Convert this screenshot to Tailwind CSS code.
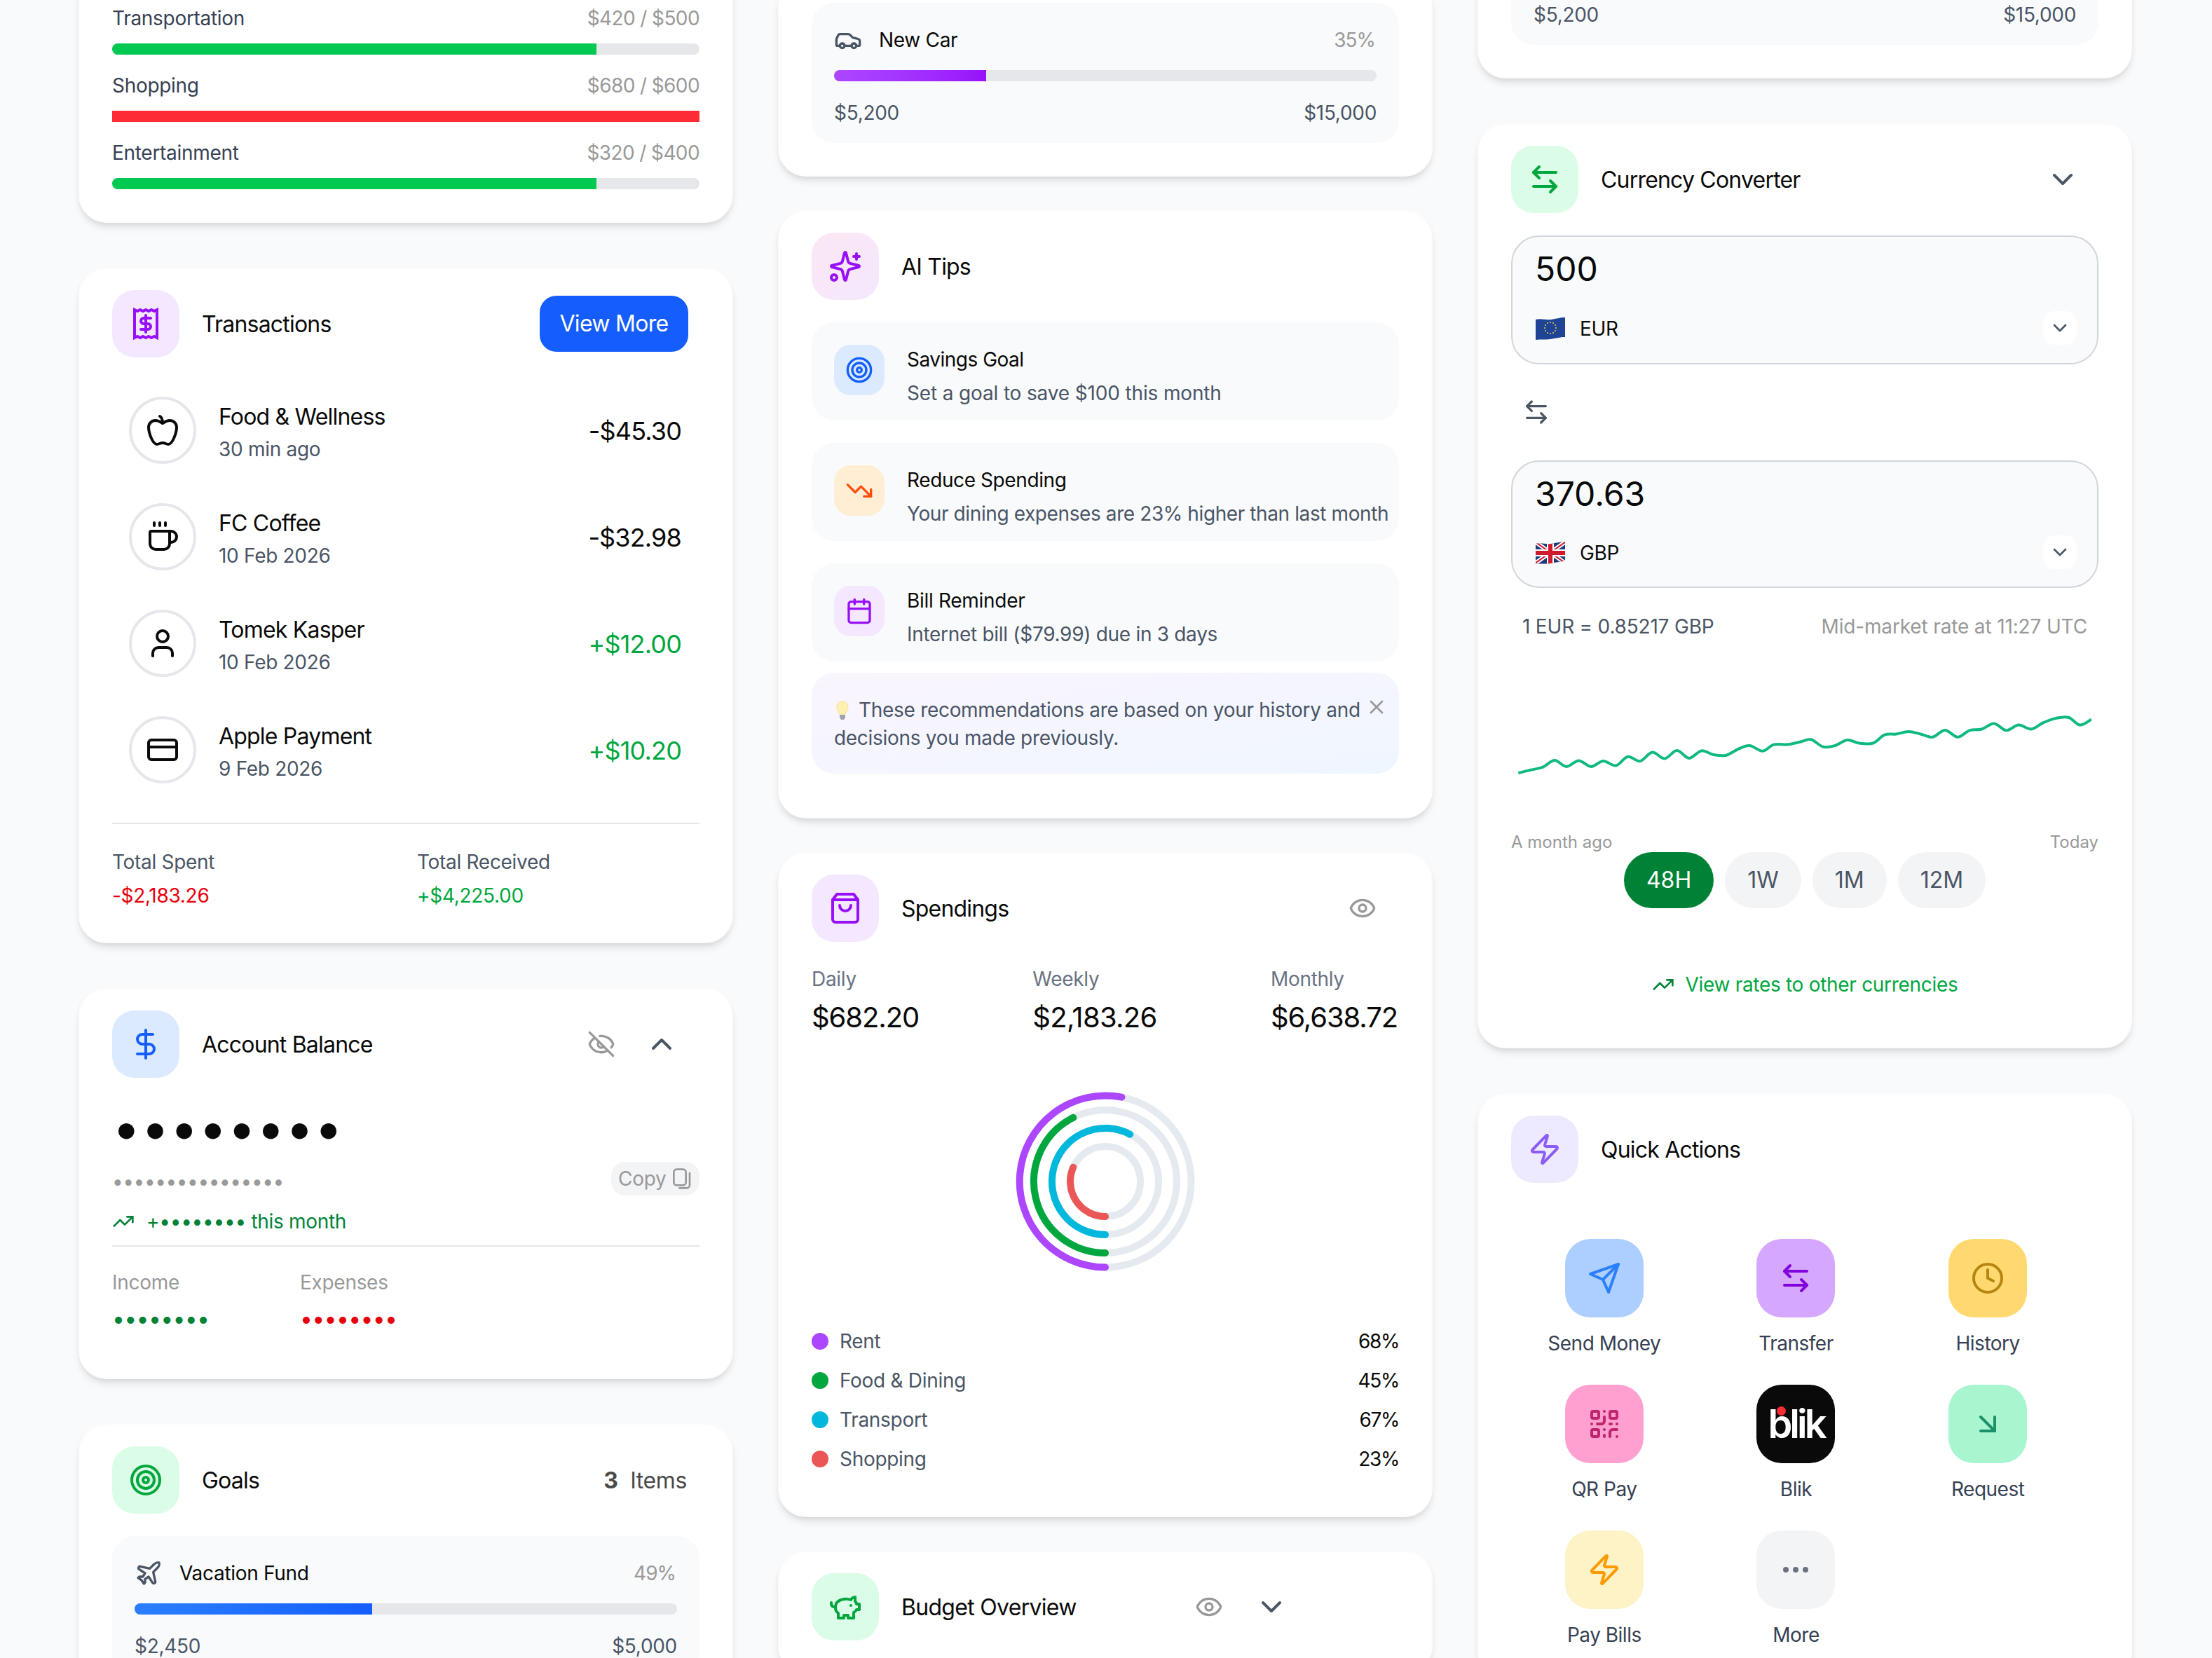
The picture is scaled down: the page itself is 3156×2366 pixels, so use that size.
<!DOCTYPE html>
<html lang="en">
<head>
  <meta charset="UTF-8">
  <title>Finance Dashboard</title>
  <script src="https://cdn.jsdelivr.net/npm/@tailwindcss/browser@4"></script>
</head>
<body class="bg-gray-50 font-[Inter,sans-serif] text-[#0a0a0a] tracking-[-0.3px]">
<div class="h-[2366px] overflow-hidden pl-[112px] grid grid-cols-[934px_934px_934px] gap-x-[64px] items-start">

  <!-- left column -->
  <div class="flex flex-col gap-[64px]">

    <!-- budget rows -->
    <div class="-mt-[42px] bg-white rounded-[40px] border-2 border-[#fcfcfd] shadow-[0_8px_12px_-2px_rgba(0,0,0,0.1),0_4px_8px_-4px_rgba(0,0,0,0.1)] px-[46px] pt-[46px] pb-[46px]">
      <div class="flex flex-col gap-[24px]">
        <div>
          <div class="flex justify-between text-[28px] leading-[40px] mb-[16px]"><span class="text-gray-700">Transportation</span><span class="text-[#999] tracking-[-0.6px]">$420 / $500</span></div>
          <div class="h-[16px] rounded-full bg-gray-200 overflow-hidden"><div class="h-full w-[691px] bg-green-500"></div></div>
        </div>
        <div>
          <div class="flex justify-between text-[28px] leading-[40px] mb-[16px]"><span class="text-gray-700">Shopping</span><span class="text-[#999] tracking-[-0.6px]">$680 / $600</span></div>
          <div class="h-[16px] bg-red-500"></div>
        </div>
        <div>
          <div class="flex justify-between text-[28px] leading-[40px] mb-[16px]"><span class="text-gray-700">Entertainment</span><span class="text-[#999] tracking-[-0.6px]">$320 / $400</span></div>
          <div class="h-[16px] rounded-full bg-gray-200 overflow-hidden"><div class="h-full w-[691px] bg-green-500"></div></div>
        </div>
      </div>
    </div>

    <!-- transactions -->
    <div class="bg-white rounded-[40px] border-2 border-[#fcfcfd] shadow-[0_8px_12px_-2px_rgba(0,0,0,0.1),0_4px_8px_-4px_rgba(0,0,0,0.1)] px-[46px] pt-[30px] pb-[46px]">
      <div class="flex items-center h-[96px]">
        <div class="w-[96px] h-[96px] rounded-[32px] bg-purple-100 flex items-center justify-center text-purple-600">
          <svg class="w-[48px] h-[48px]" viewBox="0 0 24 24" fill="none" stroke="currentColor" stroke-width="2" stroke-linejoin="miter"><path d="M4 2 6 3 8 2 10 3 12 2 14 3 16 2 18 3 20 2V22L18 21 16 22 14 21 12 22 10 21 8 22 6 21 4 22Z"/><path d="M15.500 8h-5a2 2 0 0 0 0 4h3a2 2 0 0 1 0 4h-5M12 6v12" stroke-linecap="round"/></svg>
        </div>
        <div class="ml-[32px] pt-[2px] text-[32px] leading-[48px] tracking-[-0.8px]">Transactions</div>
        <button class="ml-auto mr-[16px] w-[212px] h-[80px] rounded-[24px] bg-blue-600 text-white text-[32px] tracking-[-0.7px]">View More</button>
      </div>
      <div class="mt-[56px] flex flex-col gap-[56px] pl-[24px] pr-[26px]">
        <div class="flex items-center">
          <div class="w-[96px] h-[96px] rounded-full border-4 border-gray-200 flex items-center justify-center">
            <svg class="w-[48px] h-[48px]" viewBox="0 0 24 24" fill="none" stroke="currentColor" stroke-width="2" stroke-linecap="round" stroke-linejoin="round"><path d="M12 20.94c1.5 0 2.75 1.06 4 1.06 3 0 6-8 6-12.22A4.91 4.91 0 0 0 17 5c-2.22 0-4 1.44-5 2-1-.56-2.78-2-5-2a4.9 4.9 0 0 0-5 4.78C2 14 5 22 8 22c1.25 0 2.5-1.06 4-1.06Z"/><path d="M10 2c1 .5 2 2 2 5"/></svg>
          </div>
          <div class="ml-[32px] pt-[3px]">
            <div class="text-[32px] leading-[48px] tracking-[-0.8px]">Food &amp; Wellness</div>
            <div class="mt-[2px] text-[28px] leading-[40px] text-gray-600">30 min ago</div>
          </div>
          <div class="ml-auto pt-[2px] text-[36px] leading-[56px] tracking-[-0.85px]">-$45.30</div>
        </div>
        <div class="flex items-center">
          <div class="w-[96px] h-[96px] rounded-full border-4 border-gray-200 flex items-center justify-center">
            <svg class="w-[48px] h-[48px]" viewBox="0 0 24 24" fill="none" stroke="currentColor" stroke-width="2" stroke-linecap="round" stroke-linejoin="round"><path d="M10 2v2"/><path d="M14 2v2"/><path d="M16 8a1 1 0 0 1 1 1v8a4 4 0 0 1-4 4H7a4 4 0 0 1-4-4V9a1 1 0 0 1 1-1h14a4 4 0 1 1 0 8h-1"/><path d="M6 2v2"/></svg>
          </div>
          <div class="ml-[32px] pt-[3px]">
            <div class="text-[32px] leading-[48px] tracking-[-0.8px]">FC Coffee</div>
            <div class="mt-[2px] text-[28px] leading-[40px] text-gray-600">10 Feb 2026</div>
          </div>
          <div class="ml-auto pt-[2px] text-[36px] leading-[56px] tracking-[-0.85px]">-$32.98</div>
        </div>
        <div class="flex items-center">
          <div class="w-[96px] h-[96px] rounded-full border-4 border-gray-200 flex items-center justify-center">
            <svg class="w-[48px] h-[48px]" viewBox="0 0 24 24" fill="none" stroke="currentColor" stroke-width="2" stroke-linecap="round" stroke-linejoin="round"><circle cx="12" cy="7" r="4"/><path d="M19 21v-2a4 4 0 0 0-4-4H9a4 4 0 0 0-4 4v2"/></svg>
          </div>
          <div class="ml-[32px] pt-[3px]">
            <div class="text-[32px] leading-[48px] tracking-[-0.8px]">Tomek Kasper</div>
            <div class="mt-[2px] text-[28px] leading-[40px] text-gray-600">10 Feb 2026</div>
          </div>
          <div class="ml-auto pt-[2px] text-[36px] leading-[56px] tracking-[-0.85px] text-green-600">+$12.00</div>
        </div>
        <div class="flex items-center">
          <div class="w-[96px] h-[96px] rounded-full border-4 border-gray-200 flex items-center justify-center">
            <svg class="w-[48px] h-[48px]" viewBox="0 0 24 24" fill="none" stroke="currentColor" stroke-width="2" stroke-linecap="round" stroke-linejoin="round"><rect width="20" height="14" x="2" y="5" rx="2"/><line x1="2" x2="22" y1="10" y2="10"/></svg>
          </div>
          <div class="ml-[32px] pt-[3px]">
            <div class="text-[32px] leading-[48px] tracking-[-0.8px]">Apple Payment</div>
            <div class="mt-[2px] text-[28px] leading-[40px] text-gray-600">9 Feb 2026</div>
          </div>
          <div class="ml-auto pt-[2px] text-[36px] leading-[56px] tracking-[-0.85px] text-green-600">+$10.20</div>
        </div>
      </div>
      <div class="mt-[56px] border-t-2 border-gray-200 pt-[34px] grid grid-cols-2 gap-x-[32px] text-[28px] leading-[40px]">
        <div>
          <div class="text-gray-600">Total Spent</div>
          <div class="mt-[8px] text-red-600">-$2,183.26</div>
        </div>
        <div>
          <div class="text-gray-600">Total Received</div>
          <div class="mt-[8px] text-green-600">+$4,225.00</div>
        </div>
      </div>
    </div>

    <!-- account balance -->
    <div class="bg-white rounded-[40px] border-2 border-[#fcfcfd] shadow-[0_8px_12px_-2px_rgba(0,0,0,0.1),0_4px_8px_-4px_rgba(0,0,0,0.1)] px-[46px] pt-[30px] pb-[64px]">
      <div class="flex items-center h-[96px]">
        <div class="w-[96px] h-[96px] rounded-[32px] bg-blue-100 flex items-center justify-center text-blue-600">
          <svg class="w-[48px] h-[48px]" viewBox="0 0 24 24" fill="none" stroke="currentColor" stroke-width="2" stroke-linecap="round" stroke-linejoin="round"><line x1="12" y1="2" x2="12" y2="22"/><path d="M17 5H9.5a3.5 3.5 0 0 0 0 7h5a3.5 3.5 0 0 1 0 7H6"/></svg>
        </div>
        <div class="ml-[32px] pt-[2px] text-[32px] leading-[48px] tracking-[-0.8px]">Account Balance</div>
        <svg class="ml-auto w-[40px] h-[40px] text-[#999]" viewBox="0 0 24 24" fill="none" stroke="currentColor" stroke-width="2" stroke-linecap="round" stroke-linejoin="round"><path d="M10.733 5.076a10.744 10.744 0 0 1 11.205 6.575 1 1 0 0 1 0 .696 10.747 10.747 0 0 1-1.444 2.49"/><path d="M14.084 14.158a3 3 0 0 1-4.242-4.242"/><path d="M17.479 17.499a10.75 10.75 0 0 1-15.417-5.151 1 1 0 0 1 0-.696 10.75 10.75 0 0 1 4.446-5.143"/><path d="m2 2 20 20"/></svg>
        <svg class="ml-[42px] mr-[30px] w-[48px] h-[48px] text-gray-600" viewBox="0 0 24 24" fill="none" stroke="currentColor" stroke-width="2" stroke-linecap="round" stroke-linejoin="round"><path d="m18 15-6-6-6 6"/></svg>
      </div>
      <div class="mt-[35px] h-[72px] text-[72px] leading-[72px] tracking-[0.7px]">••••••••</div>
      <div class="mt-[13px] h-[48px] flex items-center justify-between">
        <span class="pt-[8px] text-[28px] leading-[40px] text-[#999] tracking-[-0.45px]">••••••••••••••••</span>
        <div class="h-[48px] w-[126px] rounded-[20px] bg-gray-100 flex items-center pl-[10px] text-[28px] text-[#999]">Copy
          <svg class="ml-[6px] w-[32px] h-[32px]" viewBox="0 0 24 24" fill="none" stroke="currentColor" stroke-width="2" stroke-linecap="round" stroke-linejoin="round"><rect x="4" y="2" width="13" height="17" rx="3"/><path d="M21 6v13a3 3 0 0 1-3 3H10"/></svg>
        </div>
      </div>
      <div class="mt-[17px] flex items-center text-[28px] leading-[40px] text-green-700">
        <svg class="w-[32px] h-[32px]" viewBox="0 0 24 24" fill="none" stroke="currentColor" stroke-width="2" stroke-linecap="round" stroke-linejoin="round"><polyline points="22 7 13.5 15.5 8.5 10.5 2 17"/><polyline points="16 7 22 7 22 13"/></svg>
        <span class="ml-[17px]">+•••••••• this month</span>
      </div>
      <div class="mt-[14px] border-t-2 border-gray-200"></div>
      <div class="mt-[31px] flex text-[28px] leading-[40px] text-[#999]">
        <div class="w-[268px]">
          <div>Income</div>
          <div class="mt-[12px] text-[32px] text-green-700 tracking-[-0.7px]">••••••••</div>
        </div>
        <div>
          <div>Expenses</div>
          <div class="mt-[12px] text-[32px] text-red-600 tracking-[-0.7px]">••••••••</div>
        </div>
      </div>
    </div>

    <!-- goals -->
    <div class="bg-white rounded-[40px] border-2 border-[#fcfcfd] shadow-[0_8px_12px_-2px_rgba(0,0,0,0.1),0_4px_8px_-4px_rgba(0,0,0,0.1)] px-[46px] pt-[30px] pb-[46px]">
      <div class="flex items-center h-[96px]">
        <div class="w-[96px] h-[96px] rounded-[32px] bg-green-100 flex items-center justify-center text-green-600">
          <svg class="w-[48px] h-[48px]" viewBox="0 0 24 24" fill="none" stroke="currentColor" stroke-width="2"><circle cx="12" cy="12" r="10"/><circle cx="12" cy="12" r="6"/><circle cx="12" cy="12" r="2"/></svg>
        </div>
        <div class="ml-[32px] pt-[2px] text-[32px] leading-[48px] tracking-[-0.8px]">Goals</div>
        <div class="ml-auto mr-[18px] pt-[2px] text-[32px] leading-[48px] text-[#4a4a4a] tracking-[-0.4px]"><span class="font-bold mr-[9px]">3</span> Items</div>
      </div>
      <div class="mt-[32px] rounded-[32px] bg-gray-50 px-[32px] pt-[33px] pb-[23px]">
        <div class="flex items-center h-[40px] text-[28px] leading-[40px]">
          <svg class="w-[40px] h-[40px] text-gray-600" viewBox="0 0 24 24" fill="none" stroke="currentColor" stroke-width="2" stroke-linecap="round" stroke-linejoin="round"><path d="M17.8 19.2 16 11l3.5-3.5C21 6 21.5 4 21 3c-1-.5-3 0-4.5 1.5L13 8 4.8 6.2c-.5-.1-.9.1-1.1.5l-.3.5c-.2.5-.1 1 .3 1.3L9 12l-2 3H4l-1 1 3 2 2 3 1-1v-3l3-2 3.5 5.3c.3.4.8.5 1.3.3l.5-.2c.4-.3.6-.7.5-1.2z"/></svg>
          <span class="ml-[24px]">Vacation Fund</span>
          <span class="ml-auto mr-[2px] text-[#999] tracking-[-1px]">49%</span>
        </div>
        <div class="mt-[23px] h-[16px] rounded-full bg-gray-200 overflow-hidden"><div class="h-full w-[339px] bg-gradient-to-r from-blue-500 to-blue-600"></div></div>
        <div class="mt-[25px] flex justify-between text-[28px] leading-[40px] text-gray-600"><span>$2,450</span><span>$5,000</span></div>
      </div>
    </div>
  </div>

  <!-- middle column -->
  <div class="flex flex-col gap-[48px]">

    <!-- new car goal -->
    <div class="-mt-[30px] bg-white rounded-[40px] border-2 border-[#fcfcfd] shadow-[0_8px_12px_-2px_rgba(0,0,0,0.1),0_4px_8px_-4px_rgba(0,0,0,0.1)] px-[46px] pt-[32px] pb-[46px]">
      <div class="rounded-[32px] bg-gray-50 px-[32px] pt-[33px] pb-[23px]">
        <div class="flex items-center h-[40px] text-[28px] leading-[40px]">
          <svg class="w-[40px] h-[40px] text-gray-600" viewBox="0 0 24 24" fill="none" stroke="currentColor" stroke-width="2" stroke-linecap="round" stroke-linejoin="round"><path d="M19 17h2c.6 0 1-.4 1-1v-3c0-.9-.7-1.7-1.5-1.9C18.7 10.6 16 10 16 10s-1.3-1.4-2.2-2.3c-.5-.4-1.1-.7-1.8-.7H5c-.6 0-1.1.4-1.4.9l-1.4 2.9A3.7 3.7 0 0 0 2 12v4c0 .6.4 1 1 1h2"/><circle cx="7" cy="17" r="2"/><path d="M9 17h6"/><circle cx="17" cy="17" r="2"/></svg>
          <span class="ml-[24px]">New Car</span>
          <span class="ml-auto mr-[2px] text-[#999] tracking-[-1px]">35%</span>
        </div>
        <div class="mt-[23px] h-[16px] rounded-full bg-gray-200 overflow-hidden"><div class="h-full w-[217px] bg-gradient-to-r from-purple-500 to-purple-600"></div></div>
        <div class="mt-[25px] flex justify-between text-[28px] leading-[40px] text-gray-600"><span>$5,200</span><span>$15,000</span></div>
      </div>
    </div>

    <!-- ai tips -->
    <div class="bg-white rounded-[40px] border-2 border-[#fcfcfd] shadow-[0_8px_12px_-2px_rgba(0,0,0,0.1),0_4px_8px_-4px_rgba(0,0,0,0.1)] px-[46px] pt-[30px] pb-[62px]">
      <div class="flex items-center h-[96px]">
        <div class="w-[96px] h-[96px] rounded-[32px] bg-gradient-to-br from-pink-100 to-purple-100 flex items-center justify-center text-purple-600">
          <svg class="w-[48px] h-[48px]" viewBox="0 0 24 24" fill="none" stroke="currentColor" stroke-width="2" stroke-linecap="round" stroke-linejoin="round"><path d="M9.937 15.5A2 2 0 0 0 8.5 14.063l-6.135-1.582a.5.5 0 0 1 0-.962L8.5 9.936A2 2 0 0 0 9.937 8.5l1.582-6.135a.5.5 0 0 1 .963 0L14.063 8.5A2 2 0 0 0 15.5 9.937l6.135 1.581a.5.5 0 0 1 0 .964L15.5 14.063a2 2 0 0 0-1.437 1.437l-1.582 6.135a.5.5 0 0 1-.963 0z"/><path d="M20 3v4"/><path d="M22 5h-4"/><circle cx="4" cy="20" r="2"/></svg>
        </div>
        <div class="ml-[32px] pt-[2px] text-[32px] leading-[48px] tracking-[-0.8px]">AI Tips</div>
      </div>
      <div class="mt-[32px] flex flex-col gap-[32px]">
        <div class="h-[140px] rounded-[32px] bg-gray-50 pl-[32px] flex">
          <div class="shrink-0 mt-[32px] w-[72px] h-[72px] rounded-[24px] bg-blue-100 flex items-center justify-center text-blue-600">
            <svg class="w-[40px] h-[40px]" viewBox="0 0 24 24" fill="none" stroke="currentColor" stroke-width="2"><circle cx="12" cy="12" r="10"/><circle cx="12" cy="12" r="6"/><circle cx="12" cy="12" r="2"/></svg>
          </div>
          <div class="ml-[32px] pt-[33px] text-[28px] leading-[40px]">
            <div class="tracking-[-0.5px]">Savings Goal</div>
            <div class="mt-[8px] text-gray-600 tracking-[-0.15px]">Set a goal to save $100 this month</div>
          </div>
        </div>
        <div class="h-[140px] rounded-[32px] bg-gray-50 pl-[32px] flex">
          <div class="shrink-0 mt-[32px] w-[72px] h-[72px] rounded-[24px] bg-orange-100 flex items-center justify-center text-[#ff4d0a]">
            <svg class="w-[40px] h-[40px]" viewBox="0 0 24 24" fill="none" stroke="currentColor" stroke-width="2" stroke-linecap="round" stroke-linejoin="round"><polyline points="22 17 13.5 8.5 8.5 13.5 2 7"/><polyline points="16 17 22 17 22 11"/></svg>
          </div>
          <div class="ml-[32px] pt-[33px] text-[28px] leading-[40px]">
            <div class="tracking-[-0.4px]">Reduce Spending</div>
            <div class="mt-[8px] text-gray-600 whitespace-nowrap tracking-[-0.4px]">Your dining expenses are 23% higher than last month</div>
          </div>
        </div>
        <div class="h-[140px] rounded-[32px] bg-gray-50 pl-[32px] flex">
          <div class="shrink-0 mt-[32px] w-[72px] h-[72px] rounded-[24px] bg-purple-100 flex items-center justify-center text-purple-600">
            <svg class="w-[40px] h-[40px]" viewBox="0 0 24 24" fill="none" stroke="currentColor" stroke-width="2" stroke-linecap="round" stroke-linejoin="round"><path d="M8 2v4"/><path d="M16 2v4"/><rect width="18" height="18" x="3" y="4" rx="2"/><path d="M3 10h18"/></svg>
          </div>
          <div class="ml-[32px] pt-[33px] text-[28px] leading-[40px]">
            <div>Bill Reminder</div>
            <div class="mt-[8px] text-gray-600">Internet bill ($79.99) due in 3 days</div>
          </div>
        </div>
      </div>
      <div class="mt-[16px] h-[144px] rounded-[32px] bg-gradient-to-br from-purple-50 to-blue-50 pl-[32px] pt-[33px] flex items-start">
        <div class="w-[752px] text-[28px] leading-[40px] text-gray-600">
          <svg class="inline-block w-[24px] h-[30px] align-[-6px] mr-[11px]" viewBox="0 0 24 30"><path d="M12 2c5 0 8 3.5 8 8 0 4-3 6-3.5 10h-9C7 16 4 14 4 10c0-4.500 3-8 8-8Z" fill="#fef0b0" stroke="#f8e08a" stroke-width="1"/><path d="M8 21h8v4l-2 3h-4l-2-3Z" fill="#9ca3af"/></svg>These recommendations are based on your history and decisions you made previously.
        </div>
        <svg class="ml-[6px] w-[32px] h-[32px] text-[#999]" viewBox="0 0 24 24" fill="none" stroke="currentColor" stroke-width="2" stroke-linecap="round"><path d="M18 6 6 18"/><path d="m6 6 12 12"/></svg>
      </div>
    </div>

    <!-- spendings -->
    <div class="bg-white rounded-[40px] border-2 border-[#fcfcfd] shadow-[0_8px_12px_-2px_rgba(0,0,0,0.1),0_4px_8px_-4px_rgba(0,0,0,0.1)] px-[46px] pt-[30px] pb-[61px]">
      <div class="flex items-center h-[96px]">
        <div class="w-[96px] h-[96px] rounded-[32px] bg-purple-100 flex items-center justify-center text-purple-600">
          <svg class="w-[48px] h-[48px]" viewBox="0 0 24 24" fill="none" stroke="currentColor" stroke-width="2" stroke-linecap="round" stroke-linejoin="round"><path d="M6 2 3 6v14a2 2 0 0 0 2 2h14a2 2 0 0 0 2-2V6l-3-4Z"/><path d="M3 6h18"/><path d="M16 10a4 4 0 0 1-8 0"/></svg>
        </div>
        <div class="ml-[32px] pt-[2px] text-[32px] leading-[48px] tracking-[-0.8px]">Spendings</div>
        <svg class="ml-auto mr-[32px] w-[40px] h-[40px] text-[#999]" viewBox="0 0 24 24" fill="none" stroke="currentColor" stroke-width="2" stroke-linecap="round" stroke-linejoin="round"><path d="M2.062 12.348a1 1 0 0 1 0-.696 10.75 10.75 0 0 1 19.876 0 1 1 0 0 1 0 .696 10.75 10.75 0 0 1-19.876 0"/><circle cx="12" cy="12" r="3"/></svg>
      </div>
      <div class="mt-[33px] pr-[2px] flex justify-between">
        <div><div class="text-[28px] leading-[40px] text-gray-500">Daily</div><div class="mt-[7px] text-[40px] leading-[56px] tracking-[-1.1px]">$682.20</div></div>
        <div><div class="text-[28px] leading-[40px] text-gray-500">Weekly</div><div class="mt-[7px] text-[40px] leading-[56px] tracking-[-0.7px]">$2,183.26</div></div>
        <div><div class="text-[28px] leading-[40px] text-gray-500">Monthly</div><div class="mt-[7px] text-[40px] leading-[56px] tracking-[-1.1px]">$6,638.72</div></div>
      </div>
      <svg class="mx-auto mt-[76px] w-[260px] h-[260px]" viewBox="0 0 260 260" fill="none" stroke-width="10" stroke-linecap="round">
        <circle cx="130" cy="130" r="122.500" stroke="#e5e9f0"/>
        <circle cx="130" cy="130" r="102" stroke="#e5e9f0"/>
        <circle cx="130" cy="130" r="76" stroke="#e5e9f0"/>
        <circle cx="130" cy="130" r="50" stroke="#e5e9f0"/>
        <path d="M130 252.500A122.500 122.500 0 1 1 153.400 9.700" stroke="#ad46ff"/>
        <path d="M130 232A102 102 0 0 1 84.300 38.800" stroke="#00a63e"/>
        <path d="M130 206A76 76 0 1 1 165.200 62.700" stroke="#00b8db"/>
        <path d="M130 180A50 50 0 0 1 84.300 109.700" stroke="#eb5757"/>
      </svg>
      <div class="mt-[78px] flex flex-col gap-[16px] text-[28px] leading-[40px]">
        <div class="flex items-center"><span class="w-[24px] h-[24px] rounded-full bg-purple-500"></span><span class="ml-[16px] text-gray-600">Rent</span><span class="ml-auto tracking-[-1.4px]">68%</span></div>
        <div class="flex items-center"><span class="w-[24px] h-[24px] rounded-full bg-green-600"></span><span class="ml-[16px] text-gray-600">Food &amp; Dining</span><span class="ml-auto tracking-[-1.4px]">45%</span></div>
        <div class="flex items-center"><span class="w-[24px] h-[24px] rounded-full bg-cyan-500"></span><span class="ml-[16px] text-gray-600">Transport</span><span class="ml-auto tracking-[-1.4px]">67%</span></div>
        <div class="flex items-center"><span class="w-[24px] h-[24px] rounded-full bg-[#eb5757]"></span><span class="ml-[16px] text-gray-600">Shopping</span><span class="ml-auto tracking-[-1.4px]">23%</span></div>
      </div>
    </div>

    <!-- budget overview -->
    <div class="bg-white rounded-[40px] border-2 border-[#fcfcfd] shadow-[0_8px_12px_-2px_rgba(0,0,0,0.1),0_4px_8px_-4px_rgba(0,0,0,0.1)] px-[46px] pt-[30px] pb-[46px]">
      <div class="flex items-center h-[96px]">
        <div class="w-[96px] h-[96px] rounded-[32px] bg-green-100 flex items-center justify-center text-green-600">
          <svg class="w-[48px] h-[48px]" viewBox="0 0 24 24" fill="none" stroke="currentColor" stroke-width="2" stroke-linecap="round" stroke-linejoin="round"><path d="M19 5c-1.500 0-2.800 1.400-3 2-3.500-1.500-11-.3-11 5 0 1.800 0 3 2 4.500V20h4v-2h3v2h4v-4c1-.5 1.700-1 2-2h2v-4h-2c0-1-.5-1.500-1-2V5z"/><path d="M2 9v1c0 1.100.9 2 2 2h1"/><path d="M16 11h.01"/></svg>
        </div>
        <div class="ml-[32px] w-[419px] pt-[2px] text-[32px] leading-[48px] tracking-[-0.7px]">Budget Overview</div>
        <svg class="w-[40px] h-[40px] text-[#999]" viewBox="0 0 24 24" fill="none" stroke="currentColor" stroke-width="2" stroke-linecap="round" stroke-linejoin="round"><path d="M2.062 12.348a1 1 0 0 1 0-.696 10.75 10.75 0 0 1 19.876 0 1 1 0 0 1 0 .696 10.75 10.75 0 0 1-19.876 0"/><circle cx="12" cy="12" r="3"/></svg>
        <svg class="ml-[45px] w-[48px] h-[48px] text-gray-600" viewBox="0 0 24 24" fill="none" stroke="currentColor" stroke-width="2" stroke-linecap="round" stroke-linejoin="round"><path d="m6 9 6 6 6-6"/></svg>
      </div>
    </div>
  </div>

  <!-- right column -->
  <div class="flex flex-col gap-[64px]">

    <!-- goal tail -->
    <div class="-mt-[61px] bg-white rounded-[40px] border-2 border-[#fcfcfd] shadow-[0_8px_12px_-2px_rgba(0,0,0,0.1),0_4px_8px_-4px_rgba(0,0,0,0.1)] px-[46px] pt-[30px] pb-[46px]">
      <div class="rounded-[32px] bg-gray-50 px-[32px] pt-[30px] pb-[23px]">
        <div class="flex justify-between text-[28px] leading-[40px] text-gray-600"><span>$5,200</span><span>$15,000</span></div>
      </div>
    </div>

    <!-- currency converter -->
    <div class="bg-white rounded-[40px] border-2 border-[#fcfcfd] shadow-[0_8px_12px_-2px_rgba(0,0,0,0.1),0_4px_8px_-4px_rgba(0,0,0,0.1)] px-[46px] pt-[30px] pb-[69px]">
      <div class="flex items-center h-[96px]">
        <div class="w-[96px] h-[96px] rounded-[32px] bg-green-100 flex items-center justify-center text-green-600">
          <svg class="w-[48px] h-[48px]" viewBox="0 0 24 24" fill="none" stroke="currentColor" stroke-width="2" stroke-linecap="round" stroke-linejoin="round"><path d="M8 3 4 7l4 4"/><path d="M4 7h16"/><path d="m16 21 4-4-4-4"/><path d="M20 17H4"/></svg>
        </div>
        <div class="ml-[32px] pt-[2px] text-[32px] leading-[48px] tracking-[-0.8px]">Currency Converter</div>
        <svg class="ml-auto mr-[27px] w-[48px] h-[48px] text-gray-600" viewBox="0 0 24 24" fill="none" stroke="currentColor" stroke-width="2" stroke-linecap="round" stroke-linejoin="round"><path d="m6 9 6 6 6-6"/></svg>
      </div>
      <div class="mt-[32px] rounded-[40px] border-2 border-gray-300 bg-gray-50 pl-[32px] pr-[29px] pt-[18px] pb-[26px]">
        <div class="text-[48px] leading-[56px] tracking-[0px]">500</div>
        <div class="mt-[32px] flex items-center h-[48px]">
          <svg class="w-[44px] h-[40px]" viewBox="0 0 44 40"><path d="M1 8C9 6 15 9 23 8S35 5 43 5V33C35 33 30 35 22 36S9 36 1 37Z" fill="#1f4496"/><g fill="#f2c94c"><circle cx="22" cy="12" r="1"/><circle cx="26" cy="13" r="1"/><circle cx="29" cy="16" r="1"/><circle cx="30" cy="20" r="1"/><circle cx="29" cy="24" r="1"/><circle cx="26" cy="27" r="1"/><circle cx="22" cy="28" r="1"/><circle cx="18" cy="27" r="1"/><circle cx="15" cy="24" r="1"/><circle cx="14" cy="20" r="1"/><circle cx="15" cy="16" r="1"/><circle cx="18" cy="13" r="1"/></g></svg>
          <span class="ml-[20px] pt-[2px] text-[28px] leading-[40px]">EUR</span>
          <div class="ml-auto w-[48px] h-[48px] rounded-[16px] bg-white flex items-center justify-center text-gray-600">
            <svg class="w-[32px] h-[32px]" viewBox="0 0 24 24" fill="none" stroke="currentColor" stroke-width="2" stroke-linecap="round" stroke-linejoin="round"><path d="m6 9 6 6 6-6"/></svg>
          </div>
        </div>
      </div>
      <div class="mt-[48px] ml-[16px] text-gray-600">
        <svg class="w-[40px] h-[40px]" viewBox="0 0 24 24" fill="none" stroke="currentColor" stroke-width="2" stroke-linecap="round" stroke-linejoin="round"><path d="M8 3 4 7l4 4"/><path d="M4 7h16"/><path d="m16 21 4-4-4-4"/><path d="M20 17H4"/></svg>
      </div>
      <div class="mt-[49px] rounded-[40px] border-2 border-gray-300 bg-gray-50 pl-[32px] pr-[29px] pt-[18px] pb-[25px]">
        <div class="text-[48px] leading-[56px] tracking-[0px]">370.63</div>
        <div class="mt-[31px] flex items-center h-[48px]">
          <svg class="w-[44px] h-[40px]" viewBox="0 0 44 40"><defs><clipPath id="uk-flag"><path d="M1 8C9 6 15 9 23 8S35 5 43 5V33C35 33 30 35 22 36S9 36 1 37Z"/></clipPath></defs><g clip-path="url(#uk-flag)"><rect width="44" height="40" fill="#1f3a7d"/><path d="M0 5 44 36M44 5 0 36" stroke="#fff" stroke-width="6"/><path d="M0 5 44 36M44 5 0 36" stroke="#cf1b2b" stroke-width="2"/><path d="M22 0V40M0 21H44" stroke="#fff" stroke-width="10"/><path d="M22 0V40M0 21H44" stroke="#cf1b2b" stroke-width="6"/></g></svg>
          <span class="ml-[20px] pt-[2px] text-[28px] leading-[40px]">GBP</span>
          <div class="ml-auto w-[48px] h-[48px] rounded-[16px] bg-white flex items-center justify-center text-gray-600">
            <svg class="w-[32px] h-[32px]" viewBox="0 0 24 24" fill="none" stroke="currentColor" stroke-width="2" stroke-linecap="round" stroke-linejoin="round"><path d="m6 9 6 6 6-6"/></svg>
          </div>
        </div>
      </div>
      <div class="mt-[35px] px-[16px] flex justify-between text-[28px] leading-[40px]"><span class="text-gray-600 tracking-[-0.2px]">1 EUR = 0.85217 GBP</span><span class="text-[#999] tracking-[-0.15px]">Mid-market rate at 11:27 UTC</span></div>
      <svg class="mt-[86px] w-[838px] h-[120px]" viewBox="0 0 838 120" fill="none"><path id="rate-line" stroke="#10b981" stroke-width="4" stroke-linejoin="round"/></svg>
      <div class="mt-[68px] flex justify-between text-[24px] leading-[28px] text-[#999] tracking-[0px]"><span>A month ago</span><span>Today</span></div>
      <div class="flex justify-center gap-[16px] text-[32px] tracking-[0px]">
        <button class="h-[80px] px-[32px] rounded-full bg-green-700 text-white">48H</button>
        <button class="h-[80px] px-[32px] rounded-full bg-gray-100 text-gray-600">1W</button>
        <button class="h-[80px] px-[32px] rounded-full bg-gray-100 text-gray-600">1M</button>
        <button class="h-[80px] px-[32px] rounded-full bg-gray-100 text-gray-600">12M</button>
      </div>
      <div class="mt-[89px] flex items-center justify-center text-[28px] leading-[40px] text-green-600">
        <svg class="w-[32px] h-[32px] text-green-700" viewBox="0 0 24 24" fill="none" stroke="currentColor" stroke-width="2" stroke-linecap="round" stroke-linejoin="round"><polyline points="22 7 13.5 15.5 8.5 10.5 2 17"/><polyline points="16 7 22 7 22 13"/></svg>
        <span class="ml-[16px]">View rates to other currencies</span>
      </div>
    </div>

    <!-- quick actions -->
    <div class="bg-white rounded-[40px] border-2 border-[#fcfcfd] shadow-[0_8px_12px_-2px_rgba(0,0,0,0.1),0_4px_8px_-4px_rgba(0,0,0,0.1)] px-[46px] pt-[30px] pb-[46px]">
      <div class="flex items-center h-[96px]">
        <div class="w-[96px] h-[96px] rounded-[32px] bg-violet-100 flex items-center justify-center text-[#8b5cf6]">
          <svg class="w-[48px] h-[48px]" viewBox="0 0 24 24" fill="none" stroke="currentColor" stroke-width="2" stroke-linecap="round" stroke-linejoin="round"><path d="M4 14a1 1 0 0 1-.78-1.630l9.900-10.200a.5.5 0 0 1 .860.460l-1.920 6.020A1 1 0 0 0 13 10h7a1 1 0 0 1 .780 1.630l-9.900 10.200a.5.5 0 0 1-.860-.460l1.920-6.020A1 1 0 0 0 11 14z"/></svg>
        </div>
        <div class="ml-[32px] pt-[2px] text-[32px] leading-[48px] tracking-[-0.8px]">Quick Actions</div>
      </div>
      <div class="mt-[80px] -ml-[4px] w-[821px] grid grid-cols-3 gap-y-[39px] text-[28px] leading-[40px] text-gray-700 text-center tracking-[-0.5px]">
        <div class="flex flex-col items-center">
          <div class="w-[112px] h-[112px] rounded-[36px] bg-[#adcfff] flex items-center justify-center text-[#2b7fff]">
            <svg class="w-[48px] h-[48px]" viewBox="0 0 24 24" fill="none" stroke="currentColor" stroke-width="2" stroke-linecap="round" stroke-linejoin="round"><path d="m22 2-7 20-4-9-9-4Z"/><path d="M22 2 11 13"/></svg>
          </div>
          <div class="mt-[17px]">Send Money</div>
        </div>
        <div class="flex flex-col items-center">
          <div class="w-[112px] h-[112px] rounded-[36px] bg-[#d6a7ff] flex items-center justify-center text-purple-700">
            <svg class="w-[48px] h-[48px]" viewBox="0 0 24 24" fill="none" stroke="currentColor" stroke-width="2" stroke-linecap="round" stroke-linejoin="round"><path d="M8 3 4 7l4 4"/><path d="M4 7h16"/><path d="m16 21 4-4-4-4"/><path d="M20 17H4"/></svg>
          </div>
          <div class="mt-[17px]">Transfer</div>
        </div>
        <div class="flex flex-col items-center">
          <div class="w-[112px] h-[112px] rounded-[36px] bg-[#ffd970] flex items-center justify-center text-[#b5850f]">
            <svg class="w-[48px] h-[48px]" viewBox="0 0 24 24" fill="none" stroke="currentColor" stroke-width="2" stroke-linecap="round" stroke-linejoin="round"><circle cx="12" cy="12" r="10"/><polyline points="12 6 12 12 16 14"/></svg>
          </div>
          <div class="mt-[17px]">History</div>
        </div>
        <div class="flex flex-col items-center">
          <div class="w-[112px] h-[112px] rounded-[36px] bg-[#ffa0d0] flex items-center justify-center text-[#c0266f]">
            <svg class="w-[48px] h-[48px]" viewBox="0 0 24 24" fill="none" stroke="currentColor" stroke-width="2" stroke-linecap="round" stroke-linejoin="round"><rect width="5" height="5" x="3" y="3" rx="1"/><rect width="5" height="5" x="16" y="3" rx="1"/><rect width="5" height="5" x="3" y="16" rx="1"/><path d="M21 16h-3a2 2 0 0 0-2 2v3"/><path d="M21 21v.01"/><path d="M12 7v3a2 2 0 0 1-2 2H7"/><path d="M3 12h.01"/><path d="M12 3h.01"/><path d="M12 16v.01"/><path d="M16 12h1"/><path d="M21 12v.01"/><path d="M12 21v-1"/></svg>
          </div>
          <div class="mt-[17px]">QR Pay</div>
        </div>
        <div class="flex flex-col items-center">
          <div class="relative w-[112px] h-[112px] rounded-[36px] bg-[#0a0a0a] flex items-center justify-center text-white text-[56px] leading-[56px] font-semibold tracking-[-4px]">blik
            <span class="absolute left-[29px] top-[31px] w-[13px] h-[13px] rounded-full bg-red-500"></span>
          </div>
          <div class="mt-[17px]">Blik</div>
        </div>
        <div class="flex flex-col items-center">
          <div class="w-[112px] h-[112px] rounded-[36px] bg-[#a8f5d0] flex items-center justify-center text-[#1c9068]">
            <svg class="w-[48px] h-[48px]" viewBox="0 0 24 24" fill="none" stroke="currentColor" stroke-width="2" stroke-linecap="round" stroke-linejoin="round"><path d="m7 7 10 10"/><path d="M17 7v10H7"/></svg>
          </div>
          <div class="mt-[17px]">Request</div>
        </div>
        <div class="flex flex-col items-center">
          <div class="w-[112px] h-[112px] rounded-[36px] bg-amber-100 flex items-center justify-center text-amber-500">
            <svg class="w-[48px] h-[48px]" viewBox="0 0 24 24" fill="none" stroke="currentColor" stroke-width="2" stroke-linecap="round" stroke-linejoin="round"><path d="M4 14a1 1 0 0 1-.78-1.630l9.900-10.200a.5.5 0 0 1 .860.460l-1.920 6.020A1 1 0 0 0 13 10h7a1 1 0 0 1 .780 1.630l-9.900 10.200a.5.5 0 0 1-.860-.460l1.920-6.020A1 1 0 0 0 11 14z"/></svg>
          </div>
          <div class="mt-[17px]">Pay Bills</div>
        </div>
        <div class="flex flex-col items-center">
          <div class="w-[112px] h-[112px] rounded-[36px] bg-gray-100 flex items-center justify-center text-gray-500">
            <svg class="w-[48px] h-[48px]" viewBox="0 0 24 24" fill="currentColor"><circle cx="5" cy="12" r="2"/><circle cx="12" cy="12" r="2"/><circle cx="19" cy="12" r="2"/></svg>
          </div>
          <div class="mt-[17px]">More</div>
        </div>
      </div>
    </div>
  </div>
</div>

<script>
  // rate chart: points read off the design, drawn as a smooth line
  const pts = [[10.3,103],[27.8,98.8],[45.3,94.6],[62.1,85.1],[79,93.9],[96.5,85.4],[114,93.9],[131.5,86.1],[149.6,92.5],[166.5,79.8],[184,86.1],[201.5,73.5],[219,82.6],[236.5,71.1],[254,81.9],[271.5,71.4],[289,77],[307.1,77.7],[324.6,68.6],[340.3,64],[359,71.8],[374.6,62.6],[395.3,62.3],[412.1,58.8],[427.8,55.3],[445.3,65.8],[462.1,64],[479.6,56],[496.5,60.5],[516.5,60.5],[532.8,48.6],[549.6,47.5],[567.1,44],[584,47.5],[601.5,51.8],[619,41.9],[637.1,51.8],[654,42.3],[671.5,40.5],[689,32.5],[706.5,42.3],[724,34.6],[742.1,40.5],[759,31.4],[776.5,25.1],[795.3,23.7],[811.5,34.6],[827.8,26.5]];
  let d = `M${pts[0]}`;
  for (let i = 0; i < pts.length - 1; i++) {
    const p0 = pts[i - 1] || pts[i], p1 = pts[i], p2 = pts[i + 1], p3 = pts[i + 2] || p2;
    d += `C${p1[0] + (p2[0] - p0[0]) / 6} ${p1[1] + (p2[1] - p0[1]) / 6} ${p2[0] - (p3[0] - p1[0]) / 6} ${p2[1] - (p3[1] - p1[1]) / 6} ${p2[0]} ${p2[1]}`;
  }
  document.getElementById("rate-line").setAttribute("d", d);
</script>
</body>
</html>
